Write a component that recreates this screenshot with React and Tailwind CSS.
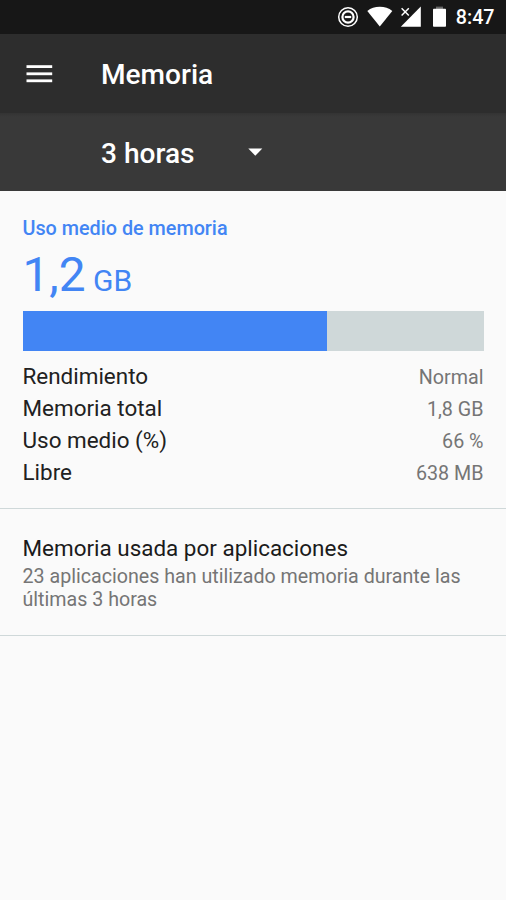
import React from 'react';

const stats = [
  { label: 'Rendimiento', value: 'Normal' },
  { label: 'Memoria total', value: '1,8 GB' },
  { label: 'Uso medio (%)', value: '66 %' },
  { label: 'Libre', value: '638 MB' },
];

const StatusBar = () => (
  <div className="h-[34px] bg-[#171717] text-white">
    <svg width="506" height="34" viewBox="0 0 506 34" fill="white">
      {/* do not disturb */}
      <circle cx="348" cy="17" r="9.3" fill="none" stroke="white" strokeWidth="1.5" />
      <circle cx="348" cy="17" r="5.6" fill="none" stroke="white" strokeWidth="2.2" />
      <rect x="344.8" y="15.9" width="6.4" height="2.2" />
      {/* wifi */}
      <path d="M379.8 26.6 367.3 10.9C370.8 8.2 375 6.8 379.8 6.8S388.8 8.2 392.3 10.9Z" />
      {/* signal */}
      <path d="M420.8 6.6V26.8H400.8Z" />
      <path d="M401.6 8.3 408.8 15.5M408.8 8.3 401.6 15.5" stroke="#171717" strokeWidth="4" />
      <path d="M401.6 8.3 408.8 15.5M408.8 8.3 401.6 15.5" stroke="white" strokeWidth="1.5" />
      {/* battery */}
      <rect x="436" y="6.6" width="7" height="2.4" fill="#666666" />
      <rect x="433" y="8.8" width="13" height="18" rx="0.8" />
      <text x="455.8" y="24.3" className="font-medium text-[19.7px]">8:47</text>
    </svg>
  </div>
);

const App = () => {
  return (
    <div className="w-[506px] h-[900px] overflow-hidden bg-[#fafafa] font-['Roboto',sans-serif]">
      <StatusBar />

      <header className="h-[79px] bg-[#2d2d2d] flex items-center text-white">
        <button className="ml-[26px]" aria-label="Menu">
          <svg className="block" width="27" height="18" viewBox="0 0 27 18" fill="white">
            <rect x="0.5" y="0.2" width="25.7" height="2.8" />
            <rect x="0.5" y="7.4" width="25.7" height="2.8" />
            <rect x="0.5" y="14.4" width="25.7" height="2.8" />
          </svg>
        </button>
        <h1 className="ml-12 pt-[2px] text-[28.1px] font-medium leading-8">Memoria</h1>
      </header>

      <div className="h-[78px] bg-linear-to-b from-[#333333] from-0% to-[#393939] to-5% pl-[101px] flex items-center text-white">
        <span className="w-[147px] pt-[3px] text-[28.1px] font-medium leading-8">3 horas</span>
        <svg width="15" height="8" viewBox="0 0 15 8" fill="white">
          <path d="M0.3 0.5H14.3L7.3 7.7Z" />
        </svg>
      </div>

      <section className="h-[318px] px-[22.5px] pt-[26px] border-b border-[#cfd8d9]">
        <h2 className="text-[19.8px] leading-6 font-medium text-[#4285f4]">Uso medio de memoria</h2>
        <p className="mt-[6px] h-[56px] leading-[56px] text-[#4285f4] text-[47.8px]">
          1,2<span className="text-[30px]"> GB</span>
        </p>
        <div className="mt-[8px] h-[39.5px] bg-[#cfd8d9]">
          <div className="h-full bg-[#4285f4]" style={{ width: '66.1%' }} />
        </div>
        <div className="mt-[9px]">
          {stats.map((s) => (
            <div key={s.label} className="h-8 flex items-baseline justify-between leading-8">
              <span className="text-[22.45px] text-[#212121]">{s.label}</span>
              <span className="text-[19.7px] text-[#757575]">{s.value}</span>
            </div>
          ))}
        </div>
      </section>

      <section className="h-[127px] px-[22.5px] pt-[25px] border-b border-[#cfd8d9]">
        <h3 className="text-[22.45px] leading-7 text-[#1b1b1b]">Memoria usada por aplicaciones</h3>
        <p className="mt-[3px] text-[19.65px] leading-[23px] text-[#757575]">
          23 aplicaciones han utilizado memoria durante las últimas 3 horas
        </p>
      </section>
    </div>
  );
};

export default App;
